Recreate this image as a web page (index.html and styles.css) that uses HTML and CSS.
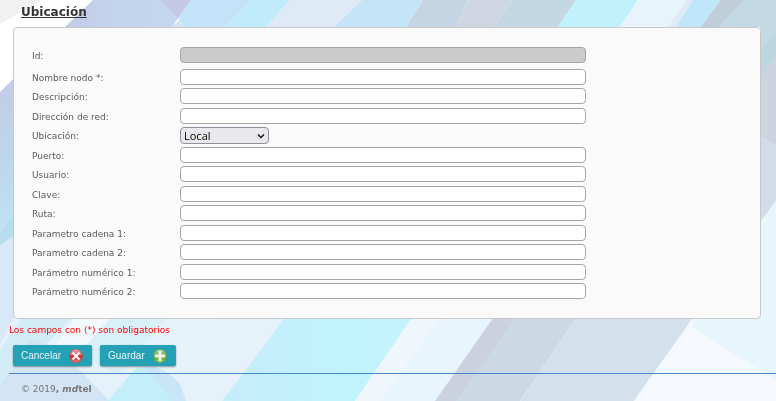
FILE: index.html
```html
<!DOCTYPE html>
<html lang="es">
<head>
<meta charset="utf-8">
<meta name="viewport" content="width=device-width, initial-scale=1">
<title>Ubicación</title>
<link rel="stylesheet" href="styles.css">
</head>
<body>
<svg class="backdrop" viewBox="0 0 776 401" preserveAspectRatio="none" aria-hidden="true">
  <defs>
    <linearGradient id="lav" x1="0" y1="0" x2="1" y2="0"><stop offset="0" stop-color="#c3cbe6"/><stop offset=".4" stop-color="#c3d4ed"/><stop offset="1" stop-color="#c5d7ed"/></linearGradient>
    <linearGradient id="cy" x1="0" y1="0" x2="1" y2="0"><stop offset="0" stop-color="#c7ecfb"/><stop offset=".6" stop-color="#c0f3fe"/><stop offset="1" stop-color="#c4f3fd"/></linearGradient>
    <linearGradient id="side" x1="0" y1="0" x2="0" y2="1"><stop offset="0" stop-color="#c4cbe8"/><stop offset=".5" stop-color="#bcd6ed"/><stop offset="1" stop-color="#c0e4f5"/></linearGradient>
  </defs>
  <path fill="#fff" d="M0 0H776V401H0Z"/>
  <path fill="#f1f1f1" d="M0 0H42L0 24Z"/>
  <path fill="url(#lav)" d="M93 0H191L172 27H65Z"/>
  <path fill="#c4c8e4" d="M160 0H191L178 18Z"/>
  <path fill="#d5e4f1" d="M179 20L184 27H172Z"/>
  <path fill="#c4e3f9" d="M191 0H253L226 27H184L178 18Z"/>
  <path fill="#bfebfb" d="M253 0H290L266 27H226Z"/>
  <path fill="#dfeaf7" d="M290 0H362L334 27H266Z"/>
  <path fill="#c5e4f8" d="M362 0H423L406 27H334Z"/>
  <path fill="#c6d5e3" d="M423 0H468L456 27H406Z"/>
  <path fill="#d0d5e2" d="M468 0H512L494 27H456Z"/>
  <path fill="#c4d8e4" d="M512 0H576L558 27H494Z"/>
  <path fill="#c1f1fd" d="M576 0H638L620 27H558Z"/>
  <path fill="#e8f4fb" d="M638 0H693L676 27H620Z"/>
  <path fill="#dcebf6" d="M687 0H693L676 27H668Z"/>
  <path fill="#c0e6fa" d="M693 0H721L701 27H676Z"/>
  <path fill="#c3d9e4" d="M721 0H776V80L760 90V27H701Z"/>
  <path fill="#bfced9" d="M721 0H744L718 27H701Z"/>
  <path fill="#bdd5df" d="M776 30L755 60V90L776 70Z"/>
  <path fill="#cdd3df" d="M776 55L755 85V135L776 145Z"/>
  <path fill="#d1dce8" d="M755 133L776 145V201L755 229Z"/>
  <path fill="#e6f6fc" d="M776 201L755 229V319H693V328L776 381Z"/>
  <path fill="url(#side)" d="M0 92L15 77V245H0Z"/>
  <path fill="#b7dcef" d="M0 235L15 212V238L0 245Z"/>
  <path fill="#d9e8f6" d="M0 245L15 235V401H0Z"/>
  <path fill="#e5f2fa" d="M13 318H285L227 401H0V345Z"/>
  <path fill="#d2edf7" d="M22 318H72L17 375L0 392V350Z"/>
  <path fill="#d3e4f4" d="M30 338L60 350L110 401H0V387Z"/>
  <path fill="#f2f9fc" d="M75 318H111L75 356L56 344Z"/>
  <path fill="#d8f0f8" d="M111 318H166L120 376L80 354Z"/>
  <path fill="#e7f3fa" d="M166 318H220L160 401H112Z"/>
  <path fill="#c3effa" d="M108 401L134 370Q152 362 166 372Q178 384 184 401Z"/>
  <path fill="#c8e6f8" d="M144 367Q165 367 180 384L186 401H172Z"/>
  <path fill="#c8eefa" d="M285 318L222 401H240L290 330Z"/>
  <path fill="url(#cy)" d="M285 318H412L355 401H226Z"/>
  <path fill="#e8f5fc" d="M412 318H493L435 401H355Z"/>
  <path fill="#eff7fc" d="M412 318H440L380 401H355Z"/>
  <path fill="#cbd1df" d="M493 318H535L470 401H435Z"/>
  <path fill="#ccd9e5" d="M516 318H576L520 401H456Z"/>
  <path fill="#d4e1ed" d="M576 318H693L634 401H520Z"/>
  <path fill="#f5f9fd" d="M693 318V328L776 381V401H634Z"/>
</svg>
<main>
  <h1>Ubicación</h1>
  <form>
    <div class="panel">
      <div class="row"><label for="id">Id:</label><input id="id" type="text" disabled></div>
      <div class="row"><label for="nombre">Nombre nodo *:</label><input id="nombre" type="text"></div>
      <div class="row"><label for="desc">Descripción:</label><input id="desc" type="text"></div>
      <div class="row"><label for="red">Dirección de red:</label><input id="red" type="text"></div>
      <div class="row"><label for="ubic">Ubicación:</label><span class="pick"><select id="ubic"><option>Local</option></select><svg viewBox="0 0 8 6" aria-hidden="true"><path d="M1 1.5L4 4.5L7 1.5"/></svg></span></div>
      <div class="row"><label for="puerto">Puerto:</label><input id="puerto" type="text"></div>
      <div class="row"><label for="usuario">Usuario:</label><input id="usuario" type="text"></div>
      <div class="row"><label for="clave">Clave:</label><input id="clave" type="password"></div>
      <div class="row"><label for="ruta">Ruta:</label><input id="ruta" type="text"></div>
      <div class="row"><label for="c1">Parametro cadena 1:</label><input id="c1" type="text"></div>
      <div class="row"><label for="c2">Parametro cadena 2:</label><input id="c2" type="text"></div>
      <div class="row"><label for="n1">Parámetro numérico 1:</label><input id="n1" type="text"></div>
      <div class="row"><label for="n2">Parámetro numérico 2:</label><input id="n2" type="text"></div>
    </div>
    <p class="note">Los campos con (*) son obligatorios</p>
    <div class="actions">
      <button type="button">Cancelar
        <svg viewBox="0 0 14 14" aria-hidden="true"><defs><linearGradient id="r" x1="0" y1="0" x2="0" y2="1"><stop offset="0" stop-color="#eba6a6"/><stop offset=".45" stop-color="#d65c5e"/><stop offset=".5" stop-color="#c41f25"/><stop offset="1" stop-color="#ee7a74"/></linearGradient></defs><circle cx="7" cy="7" r="6.7" fill="url(#r)" stroke="#b6474d" stroke-width=".5"/><path d="M3.5 3.5L10.5 10.5M10.5 3.5L3.5 10.5" stroke="#f4eeee" stroke-width="2.4"/></svg>
      </button>
      <button type="button">Guardar
        <svg viewBox="0 0 14 14" aria-hidden="true"><defs><linearGradient id="g" x1="0" y1="0" x2="0" y2="1"><stop offset="0" stop-color="#a9cf96"/><stop offset=".45" stop-color="#70b04e"/><stop offset=".5" stop-color="#4b9827"/><stop offset="1" stop-color="#8fd05c"/></linearGradient></defs><circle cx="7" cy="7" r="6.7" fill="url(#g)" stroke="#609e50" stroke-width=".5"/><path d="M7 1.8V12.2M1.8 7H12.2" stroke="#eef4e9" stroke-width="3"/></svg>
      </button>
    </div>
  </form>
</main>
<footer>© 2019<b>, <i>md</i>tel</b></footer>
</body>
</html>
```
FILE: styles.css
```css
* { box-sizing: border-box; }
html { min-height: 100%; }
body {
  margin: 0;
  font: 9px/12px "DejaVu Sans", Verdana, sans-serif;
  color: #5c5c5c;
}
.backdrop {
  position: fixed;
  inset: 0;
  z-index: -1;
  width: 100%;
  height: 100%;
}
main { padding: 4px 15px 0 13px; }
h1 {
  margin: 0 8px 7px;
  font-size: 12px;
  line-height: 16px;
  color: #333;
  text-decoration: underline;
}
.panel {
  padding: 19px 18px 15px;
  background: #fafafa;
  border: 1px solid #c8c8c8;
  border-radius: 4px;
}
.row {
  display: grid;
  grid-template-columns: 148px minmax(0, 406px);
  align-items: start;
  height: 20px;
}
.row:nth-child(even) { height: 19px; }
.row:first-child { height: 22px; }
.row label { padding-top: 3px; }
input, select {
  height: 16px;
  margin: 0;
  padding: 0 4px;
  border: 1px solid #a5a5a5;
  border-radius: 4px;
  background: #fff;
  font: 10px "DejaVu Sans", sans-serif;
}
input { width: 100%; }
input:disabled { background: #cbcbcb; }
.pick {
  position: relative;
  width: 89px;
}
.pick select {
  display: block;
  width: 100%;
  height: 17px;
  padding: 0 3px;
  appearance: none;
  border-color: #8f8f9d;
  background: #e9e9ed;
  color: #000;
  font: 11px "Open Sans", "Noto Sans", sans-serif;
  line-height: 15px;
}
.pick svg {
  position: absolute;
  right: 4px;
  top: 6px;
  width: 8px;
  height: 6px;
  fill: none;
  stroke: #111;
  stroke-width: 1.4;
  pointer-events: none;
}
.note {
  margin: 5px 0 9px -4px;
  color: #f00;
}
.actions {
  display: flex;
  gap: 8px;
}
button {
  display: flex;
  align-items: center;
  gap: 8px;
  height: 21px;
  padding: 0 9px 0 8px;
  border: 0;
  border-radius: 2px;
  background: #24a1b5;
  box-shadow: 0 1px 2px #0006;
  color: #e4f5f8;
  font: 10px "Liberation Sans", Arial, sans-serif;
}
button svg {
  width: 14px;
  height: 14px;
}
footer {
  margin: 7px 0 0 9px;
  padding: 9px 12px 0;
  border-top: 1px solid #4687d0;
  color: #777;
}
```
